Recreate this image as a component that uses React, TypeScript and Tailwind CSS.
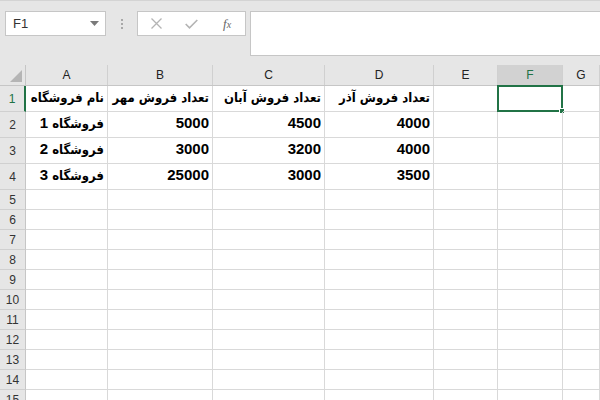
import React from "react";

const cols = [
  { l: "A", w: "w-[82px]" },
  { l: "B", w: "w-[105px]" },
  { l: "C", w: "w-[112px]" },
  { l: "D", w: "w-[109px]" },
  { l: "E", w: "w-[64px]" },
  { l: "F", w: "w-[65px]" },
  { l: "G", w: "flex-1" },
];

const data: string[][] = [
  ["نام فروشگاه", "تعداد فروش مهر", "تعداد فروش آبان", "تعداد فروش آذر"],
  ["فروشگاه 1", "5000", "4500", "4000"],
  ["فروشگاه 2", "3000", "3200", "4000"],
  ["فروشگاه 3", "25000", "3000", "3500"],
];

function CellText({ t }: { t: string }) {
  const parts = t.split(/(\d+)/).filter((p) => p.length > 0);
  return (
    <span dir="rtl" className="whitespace-nowrap font-bold text-black leading-[17px]">
      {parts.map((p, i) =>
        /^\d+$/.test(p) ? (
          <span key={i} className="text-[15px] font-['Liberation_Sans',sans-serif]">{p}</span>
        ) : (
          <span key={i} className="text-[13px] font-['DejaVu_Sans_Condensed','DejaVu_Sans',sans-serif]">{p}</span>
        )
      )}
    </span>
  );
}

function Toolbar() {
  return (
    <div className="h-[65px] bg-[#e6e6e6] border-t border-[#d4d4d4] flex items-start pt-[10px] pl-[5px]">
      <div className="w-[101px] h-[25px] bg-white border border-[#c6c6c6] flex items-center justify-between pl-[7px] pr-[6px]">
        <span className="text-[13px] text-[#333] font-['Liberation_Sans',sans-serif]">F1</span>
        <svg width="9" height="5" viewBox="0 0 9 5"><path d="M0 0 H9 L4.5 5 Z" fill="#7a7a7a" /></svg>
      </div>
      <div className="w-[31px] h-[25px] flex flex-col items-center justify-center gap-[2px]">
        <div className="w-[2px] h-[2px] bg-[#a8a8a8]" />
        <div className="w-[2px] h-[2px] bg-[#a8a8a8]" />
        <div className="w-[2px] h-[2px] bg-[#a8a8a8]" />
      </div>
      <div className="w-[109px] h-[25px] bg-white border border-[#c6c6c6] flex items-center">
        <div className="w-[36px] flex justify-center pl-[1px]">
          <svg width="11" height="11" viewBox="0 0 11 11"><path d="M0.5 0.5 L10.5 10.5 M10.5 0.5 L0.5 10.5" stroke="#b4b4b4" strokeWidth="1.3" /></svg>
        </div>
        <div className="w-[36px] flex justify-center">
          <svg width="13" height="10" viewBox="0 0 13 10"><path d="M0.7 5 L4.5 8.8 L12.3 1" stroke="#b4b4b4" strokeWidth="1.6" fill="none" /></svg>
        </div>
        <div className="w-[36px] flex justify-center">
          <span className="text-[13px] italic text-[#666] font-['Liberation_Serif',serif] leading-none">f<span className="text-[10px]">x</span></span>
        </div>
      </div>
      <div className="flex-1 h-[45px] ml-[4px] bg-white border border-r-0 border-[#c6c6c6]" />
    </div>
  );
}

function HeaderRow() {
  return (
    <div className="h-[21px] flex bg-[#e6e6e6] border-b border-[#c6c6c6] font-['Liberation_Sans',sans-serif] text-[12px] text-[#222]">
      <div className="w-[26px] border-r border-[#c6c6c6] flex items-end justify-end pr-[3px] pb-[3px]">
        <svg width="12" height="12" viewBox="0 0 12 12"><path d="M12 0 V12 H0 Z" fill="#b5b5b5" /></svg>
      </div>
      {cols.map((c) => (
        <div
          key={c.l}
          className={`${c.w} border-r border-[#d0d0d0] flex items-center justify-center ${c.l === "F" ? "bg-[#d2d2d2] text-[#217346]" : ""}`}
        >
          {c.l}
        </div>
      ))}
    </div>
  );
}

function Row({ n, cells }: { n: number; cells: string[] }) {
  const tall = n <= 4;
  return (
    <div className={`${tall ? "h-[26px]" : "h-[20px]"} flex`}>
      <div
        className={`w-[26px] bg-[#e6e6e6] border-b border-[#d0d0d0] flex items-center justify-center text-[12px] font-['Liberation_Sans',sans-serif] ${n === 1 ? "border-r-2 border-r-[#217346] text-[#217346] bg-[#e1e1e1]" : "border-r border-r-[#c6c6c6] text-[#333]"}`}
      >
        {n}
      </div>
      {cols.map((c, i) => (
        <div
          key={c.l}
          className={`${c.w} relative border-r border-b border-[#d9d9d9] flex items-center justify-end pr-[3px] pb-[4px]`}
        >
          {cells[i] ? <CellText t={cells[i]} /> : null}
          {n === 1 && c.l === "F" ? (
            <div className="absolute -left-[1px] -top-[1px] w-[66px] h-[27px] border-2 border-[#217346]">
              <div className="absolute -right-[4px] -bottom-[4px] w-[6px] h-[6px] bg-[#217346] border border-white" />
            </div>
          ) : null}
        </div>
      ))}
    </div>
  );
}

export default function App() {
  const rows = Array.from({ length: 15 }, (_, i) => i + 1);
  return (
    <div className="w-[600px] h-[400px] overflow-hidden bg-white">
      <Toolbar />
      <HeaderRow />
      {rows.map((n) => (
        <Row key={n} n={n} cells={data[n - 1] ?? []} />
      ))}
    </div>
  );
}
